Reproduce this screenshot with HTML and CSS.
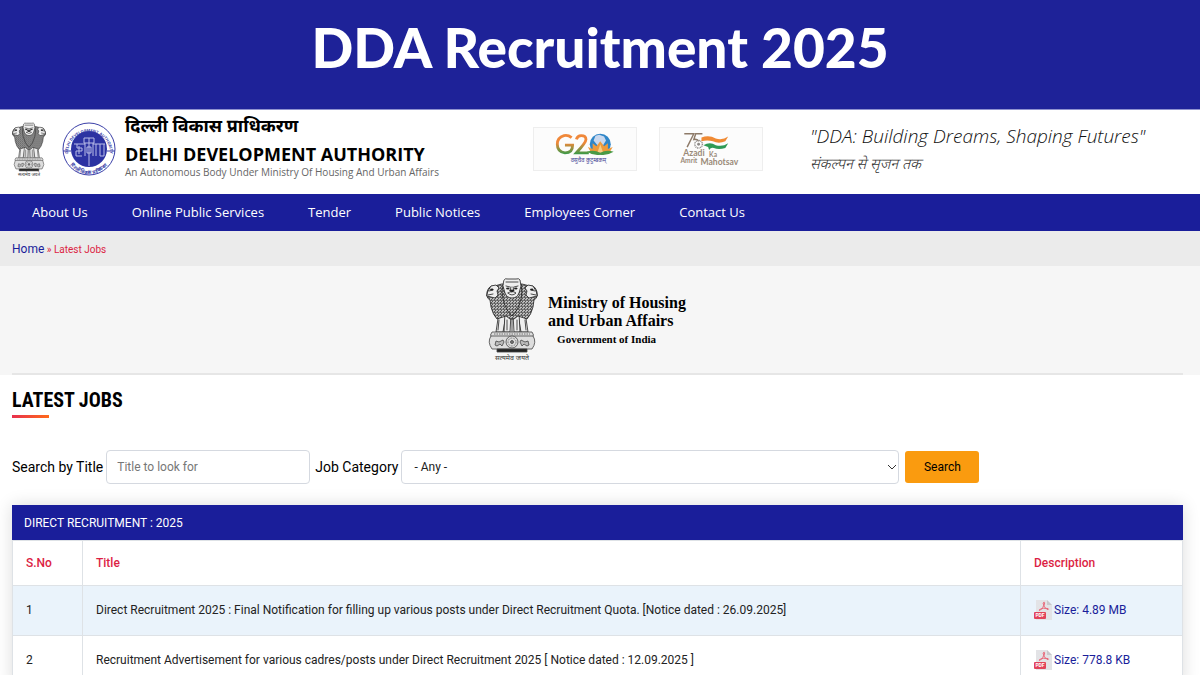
FILE: index.html
```html
<!DOCTYPE html>
<html lang="en">
<head>
  <meta charset="UTF-8">
  <meta name="viewport" content="width=device-width, initial-scale=1.0">
  <title>DDA Recruitment 2025</title>
  <link rel="stylesheet" href="styles.css">
</head>
<body>

<!-- shared drawings -->
<svg class="sprite" aria-hidden="true">
  <defs>
    <pattern id="mane" width="3" height="3" patternUnits="userSpaceOnUse">
      <rect width="3" height="3" fill="#555"/>
      <path d="M0 1Q1 0 2 1M1 3Q2 1.600 3 2.600" fill="none" stroke="#eee" stroke-width=".8"/>
    </pattern>
    <symbol id="emblem" viewBox="0 0 52 84">
      <g stroke="#222" stroke-width=".8" fill="#eee" stroke-linejoin="round" stroke-linecap="round">
        <path d="M13 34L10 54H17L20 37ZM39 34L42 54H35L32 37Z"/>
        <path d="M19 34L18 54H24L25 36ZM33 34L34 54H28L27 36Z"/>
        <path d="M13 42L12 52M21 42V52M31 42V52M39 42L40 52M26 36V54" fill="none"/>
        <path fill="url(#mane)" d="M8 8Q3 7 1 14Q0 20 4 22L5 29Q7 37 11 41L20 38L24 41H28L32 38L41 41Q45 37 47 29L48 22Q52 20 51 14Q49 7 44 8L36 6H16Z"/>
        <path fill="url(#mane)" d="M17 7Q15 13 17 21Q20 33 26 38Q32 33 35 21Q37 13 35 7Z"/>
        <path d="M18 2Q19 0 22 1H30Q33 0 34 2L35 8L33 15Q31 20 26 20Q21 20 19 15L17 8Z"/>
        <path d="M2 13L5 8L10 7L13 10L11 13L12 17L9 20L5 19L1 18ZM50 13L47 8L42 7L39 10L41 13L40 17L43 20L47 19L51 18Z"/>
        <path fill="none" d="M20 4H32M20 8L24 9M32 8L28 9M25 9L24 13H28L27 9M22 15Q26 12 30 15Q26 19 22 15M3 13L7 12M2 17L7 16M49 13L45 12M50 17L45 16"/>
        <path fill="#222" d="M21 10H23V11H21ZM29 10H31V11H29ZM24 12H28L26 14ZM5 11H7V12H5ZM45 11H47V12H45Z"/>
      </g>
      <g stroke="#444" stroke-width=".8" fill="#ddd">
        <path d="M6 54H46Q49 57 46 60H6Q3 57 6 54Z"/>
        <path d="M5 58H47Q51 64 46 71H6Q1 64 5 58Z"/>
        <path d="M8 56H44" stroke-dasharray="1.500 1" stroke="#555"/>
        <circle cx="26" cy="64" r="6"/>
        <circle cx="26" cy="64" r="4" stroke-dasharray=".8 .8"/>
        <circle cx="26" cy="64" r="1.500" fill="#777"/>
        <path fill="#bbb" d="M9 67L10 63L13 64L17 62L18 64L16 68L14 66L11 68ZM43 67L42 63L39 64L35 62L34 64L36 68L38 66L41 68Z"/>
        <path fill="#222" d="M11 71H41V74H11Z"/>
      </g>
      <text x="26" y="82" text-anchor="middle" class="motto">सत्यमेव जयते</text>
    </symbol>
    <symbol id="pdf" viewBox="0 0 18 20">
      <path fill="#e3e3e6" d="M2 0H13L18 5V20H2Z"/>
      <path fill="#c8c8cc" d="M13 0V5H18Z"/>
      <path fill="none" stroke="#e8697a" stroke-linejoin="round" d="M9 3Q11 1 10.500 4Q9 8 6 10.500Q5 11 5.500 9.500Q9 7.500 14 8.500Q15.500 9.500 13 9.500Q10 7.500 9 3Z"/>
      <rect y="12" width="12" height="7" rx="1" fill="#e2435a"/>
      <text x="6" y="17" text-anchor="middle" class="pdf-label">PDF</text>
    </symbol>
  </defs>
</svg>

<div class="banner">
  <h1>DDA Recruitment 2025</h1>
</div>

<header class="site-header">
  <svg class="emblem-small" role="img" aria-label="State Emblem of India"><use href="#emblem"/></svg>
  <svg class="seal" viewBox="0 0 54 54" role="img" aria-label="Delhi Development Authority">
    <defs>
      <path id="arc-top" d="M6 31A21 21 0 1 1 48 31"/>
      <path id="arc-bottom" d="M3 28A24 24 0 0 0 51 28"/>
    </defs>
    <circle cx="27" cy="27" r="26" fill="#fff" stroke="#3a3fa8"/>
    <circle cx="27" cy="27" r="18" fill="#2c32a2"/>
    <path d="M1 29H9M45 29H53" stroke="#3a3fa8"/>
    <g fill="none" stroke="#b9bce8" stroke-width="1">
      <path d="M12 22H23M15 22V26H20V29H14V34H20M31 22H43M34 22V34M38 22V34H42V22M22 16H32V21H22ZM23 21V34M31 21V34M27 16V44M25 25H29V31H25ZM17 24V32"/>
    </g>
    <text class="seal-text"><textPath href="#arc-top" startOffset="50%" text-anchor="middle">DELHI DEVELOPMENT AUTHORITY</textPath></text>
    <text class="seal-text hi"><textPath href="#arc-bottom" startOffset="50%" text-anchor="middle">दिल्ली विकास प्राधिकरण</textPath></text>
  </svg>
  <div class="org">
    <div class="org-hi" lang="hi">दिल्ली विकास प्राधिकरण</div>
    <div class="org-en">DELHI DEVELOPMENT AUTHORITY</div>
    <div class="org-sub">An Autonomous Body Under Ministry Of Housing And Urban Affairs</div>
  </div>
  <div class="partners">
    <svg class="partner" viewBox="0 0 104 44" role="img" aria-label="G20">
      <defs>
        <linearGradient id="tricolor" gradientUnits="userSpaceOnUse" x1="0" y1="8" x2="0" y2="27">
          <stop offset=".4" stop-color="#f0883a"/>
          <stop offset="1" stop-color="#3f9a48"/>
        </linearGradient>
      </defs>
      <g fill="none" stroke="url(#tricolor)" stroke-width="3">
        <path d="M38 10Q34 7 30 8Q23 10 23 17Q23 25 31 26Q39 26 39 18H31"/>
        <path d="M43 12Q44 8 48 8Q53 8 53 12Q53 15 43 26H56"/>
      </g>
      <circle cx="68" cy="17" r="11" fill="#2f86c8"/>
      <path fill="#c9d8ee" d="M63 8L67 7L72 9L74 13L71 18L68 22L65 18L61 13Z"/>
      <path fill="#ee9a3c" d="M68 14L72 19L76 16V22L81 20L77 27H59L55 20L60 22V16L64 19Z"/>
      <path fill="#f7cf86" d="M68 17L71 26H65Z"/>
      <path fill="#4a9a45" d="M54 25Q61 22 68 26Q75 22 82 25Q76 29 68 28Q60 29 54 25Z"/>
      <text x="37" y="36" class="g20-text">वसुधैव कुटुम्बकम्</text>
    </svg>
    <svg class="partner" viewBox="0 0 104 44" role="img" aria-label="Azadi Ka Amrit Mahotsav">
      <path fill="none" stroke="#8d7a68" stroke-width="1.500" d="M24 6H34L27 20M43 6H36L34 12Q38 11 39 14"/>
      <circle cx="39" cy="17" r="4" fill="none" stroke="#8d8a88" stroke-width="1.500" stroke-dasharray="1 .7"/>
      <circle cx="39" cy="17" r="1.500" fill="#8d8a88"/>
      <path fill="#f08a34" d="M42 10Q50 7 57 11Q64 13 70 9L67 14Q60 17 54 14Q48 12 42 14Z"/>
      <path fill="#2f9a55" d="M44 18Q51 14 57 18Q64 20 70 16L67 21Q60 23 55 21Q52 20 50 23L49 20Z"/>
      <text x="23" y="29" class="azadi">Azadi</text>
      <text x="50" y="30" class="azadi small">Ka</text>
      <text x="20" y="37" class="azadi small">Amrit</text>
      <text x="41" y="39" class="azadi">Mahotsav</text>
    </svg>
  </div>
  <div class="slogan">
    <div class="slogan-en">"DDA: Building Dreams, Shaping Futures"</div>
    <div class="slogan-hi" lang="hi">संकल्पन से सृजन तक</div>
  </div>
</header>

<nav class="main-nav">
  <a href="#">About Us</a>
  <a href="#">Online Public Services</a>
  <a href="#">Tender</a>
  <a href="#">Public Notices</a>
  <a href="#">Employees Corner</a>
  <a href="#">Contact Us</a>
</nav>

<div class="breadcrumb"><a href="#">Home</a> » Latest Jobs</div>

<section class="ministry">
  <div class="ministry-inner">
    <svg class="emblem-large" role="img" aria-label="State Emblem of India"><use href="#emblem"/></svg>
    <div class="ministry-text">
      Ministry of Housing<br>and Urban Affairs
      <div class="govt">Government of India</div>
    </div>
  </div>
</section>

<main>
  <h2>LATEST JOBS</h2>

  <form class="filters" onsubmit="return false">
    <label for="title">Search by Title</label>
    <input type="text" id="title" placeholder="Title to look for">
    <label for="category">Job Category</label>
    <div class="select-wrap">
      <select id="category">
        <option>- Any -</option>
      </select>
      <svg class="chevron" viewBox="0 0 8 6" aria-hidden="true"><path d="M0 1L4 5L8 1"/></svg>
    </div>
    <button type="submit">Search</button>
  </form>

  <div class="table-wrap">
    <table class="jobs">
      <caption>DIRECT RECRUITMENT : 2025</caption>
      <thead>
        <tr><th class="sno">S.No</th><th>Title</th><th class="desc">Description</th></tr>
      </thead>
      <tbody>
        <tr>
          <td>1</td>
          <td>Direct Recruitment 2025 : Final Notification for filling up various posts under Direct Recruitment Quota. [Notice dated : 26.09.2025]</td>
          <td><a href="#" class="file"><svg><use href="#pdf"/></svg>Size: 4.89 MB</a></td>
        </tr>
        <tr>
          <td>2</td>
          <td>Recruitment Advertisement for various cadres/posts under Direct Recruitment 2025 [ Notice dated : 12.09.2025 ]</td>
          <td><a href="#" class="file"><svg><use href="#pdf"/></svg>Size: 778.8 KB</a></td>
        </tr>
      </tbody>
    </table>
  </div>
</main>

</body>
</html>
```
FILE: styles.css
```css
* { box-sizing: border-box; margin: 0; padding: 0; }
html, body { height: 100%; overflow: hidden; }
body { font-family: Roboto, "Liberation Sans", sans-serif; font-size: 12px; color: #222; background: #fff; }
a { text-decoration: none; color: #1a1e9a; }
.sprite { position: absolute; width: 0; height: 0; }

.banner { background: #1e2298; height: 110px; padding-top: 12px; text-align: center; border-bottom: 1px solid #8f92cf; }
.banner h1 { font-family: Lato, "Open Sans", sans-serif; font-weight: 900; font-size: 55px; line-height: 70px; color: #fff; }

.site-header { display: flex; align-items: flex-start; height: 84px; padding: 12px 12px 0; font-family: "Open Sans", "Noto Sans", sans-serif; }
.emblem-small { width: 34px; height: 56px; margin-right: 16px; }
.seal { width: 54px; height: 54px; margin-right: 9px; }
.org { width: 408px; color: #000; margin-top: -8px; white-space: nowrap; }
.org-hi { font-family: "Noto Sans Devanagari", "Noto Sans", sans-serif; font-size: 18px; line-height: 28px; font-weight: 700; }
.org-en { font-size: 18px; line-height: 24px; font-weight: 700; }
.org-sub { font-size: 10px; line-height: 12px; color: #666; }
.partners { display: flex; gap: 22px; margin-top: 5px; }
.partner { width: 104px; height: 44px; border: 1px solid #eee; background: #fcfcfc; }
.slogan { margin-left: 47px; font-style: italic; color: #111; white-space: nowrap; }
.slogan-en { font-size: 19px; line-height: 28px; font-weight: 300; }
.slogan-hi { font-family: "Noto Sans Devanagari", "Noto Sans", sans-serif; font-size: 15px; line-height: 32px; font-weight: 300; color: #333; }

.motto { font-family: "Noto Sans", sans-serif; font-size: 7px; fill: #333; }
.pdf-label { font-family: Roboto, sans-serif; font-size: 5px; font-weight: 700; fill: #fff; }
.seal-text { font-family: "Open Sans", sans-serif; font-size: 4px; font-weight: 700; fill: #3a3fa8; }
.seal-text.hi { font-size: 5px; }
.g20-text { font-family: "Noto Sans", sans-serif; font-size: 6px; fill: #3c4292; }
.azadi { font-family: Lato, sans-serif; font-size: 9px; font-weight: 700; fill: #9a8a78; }
.azadi.small { font-size: 7px; }

.main-nav { display: flex; gap: 44px; height: 37px; padding: 0 32px 1px; align-items: center; background: #1a1e9a; }
.main-nav a { font-family: "Open Sans", sans-serif; font-size: 13px; color: #fff; white-space: nowrap; }

.breadcrumb { height: 35px; padding-left: 12px; line-height: 36px; font-size: 10px; background: #ebebeb; color: #dc1f44; }
.breadcrumb a { font-size: 12px; }

.ministry { background: #f6f6f6; padding: 0 17px 0 12px; }
.ministry-inner { display: flex; justify-content: center; gap: 10px; height: 109px; padding: 12px 23px 0 0; border-bottom: 2px solid #e6e6e6; }
.emblem-large { width: 52px; height: 84px; }
.ministry-text { font-family: "Liberation Serif", serif; font-size: 16px; font-weight: 700; line-height: 18px; color: #000; padding-top: 16px; }
.govt { font-size: 11px; padding-left: 9px; }

main { padding: 12px 17px 0 12px; }
h2 { font-family: "Roboto Condensed", "Liberation Sans Narrow", Roboto, sans-serif; font-size: 20px; line-height: 26px; color: #000; }
h2::after { content: ""; display: block; width: 37px; height: 3px; margin-top: 2px; background: linear-gradient(90deg, #e8304e, #ff6a1a); }

.filters { display: flex; align-items: center; margin: 32px 0 21px; color: #000; }
.filters label { font-size: 14px; white-space: nowrap; }
.filters input, .filters select { height: 34px; border: 1px solid #d5d9e0; border-radius: 4px; background: #fff; font-family: inherit; font-size: 12px; color: #222; }
.filters input { width: 204px; padding: 0 10px; margin: 0 5px 0 3px; }
.filters input::placeholder { color: #777; }
.select-wrap { position: relative; width: 498px; margin: 0 6px 0 3px; }
.select-wrap select { width: 100%; padding: 0 12px; appearance: none; }
.chevron { position: absolute; right: 3px; top: 14px; width: 8px; height: 6px; fill: none; stroke: #333; pointer-events: none; overflow: visible; }
.filters button { width: 74px; height: 32px; border: 0; border-radius: 3px; background: #fa9b0f; font-family: inherit; font-size: 12px; color: #000; }

.table-wrap { box-shadow: 0 0 16px rgba(0, 0, 0, .14); }
.jobs { width: 100%; border-collapse: collapse; table-layout: fixed; }
.jobs caption { height: 35px; padding-left: 12px; line-height: 36px; text-align: left; font-size: 12px; color: #fff; background: #1a1e9a; }
.jobs th, .jobs td { padding: 0 13px; text-align: left; border: 1px solid #dee2e6; }
.jobs th { height: 45px; font-weight: 500; color: #dc1f44; }
.jobs td { height: 50px; padding-bottom: 2px; }
.jobs .sno { width: 70px; }
.jobs .desc { width: 162px; }
.jobs tbody tr:nth-child(odd) { background: #eaf3fb; }
.file { display: flex; align-items: center; }
.file svg { width: 18px; height: 20px; margin-right: 2px; }
```
